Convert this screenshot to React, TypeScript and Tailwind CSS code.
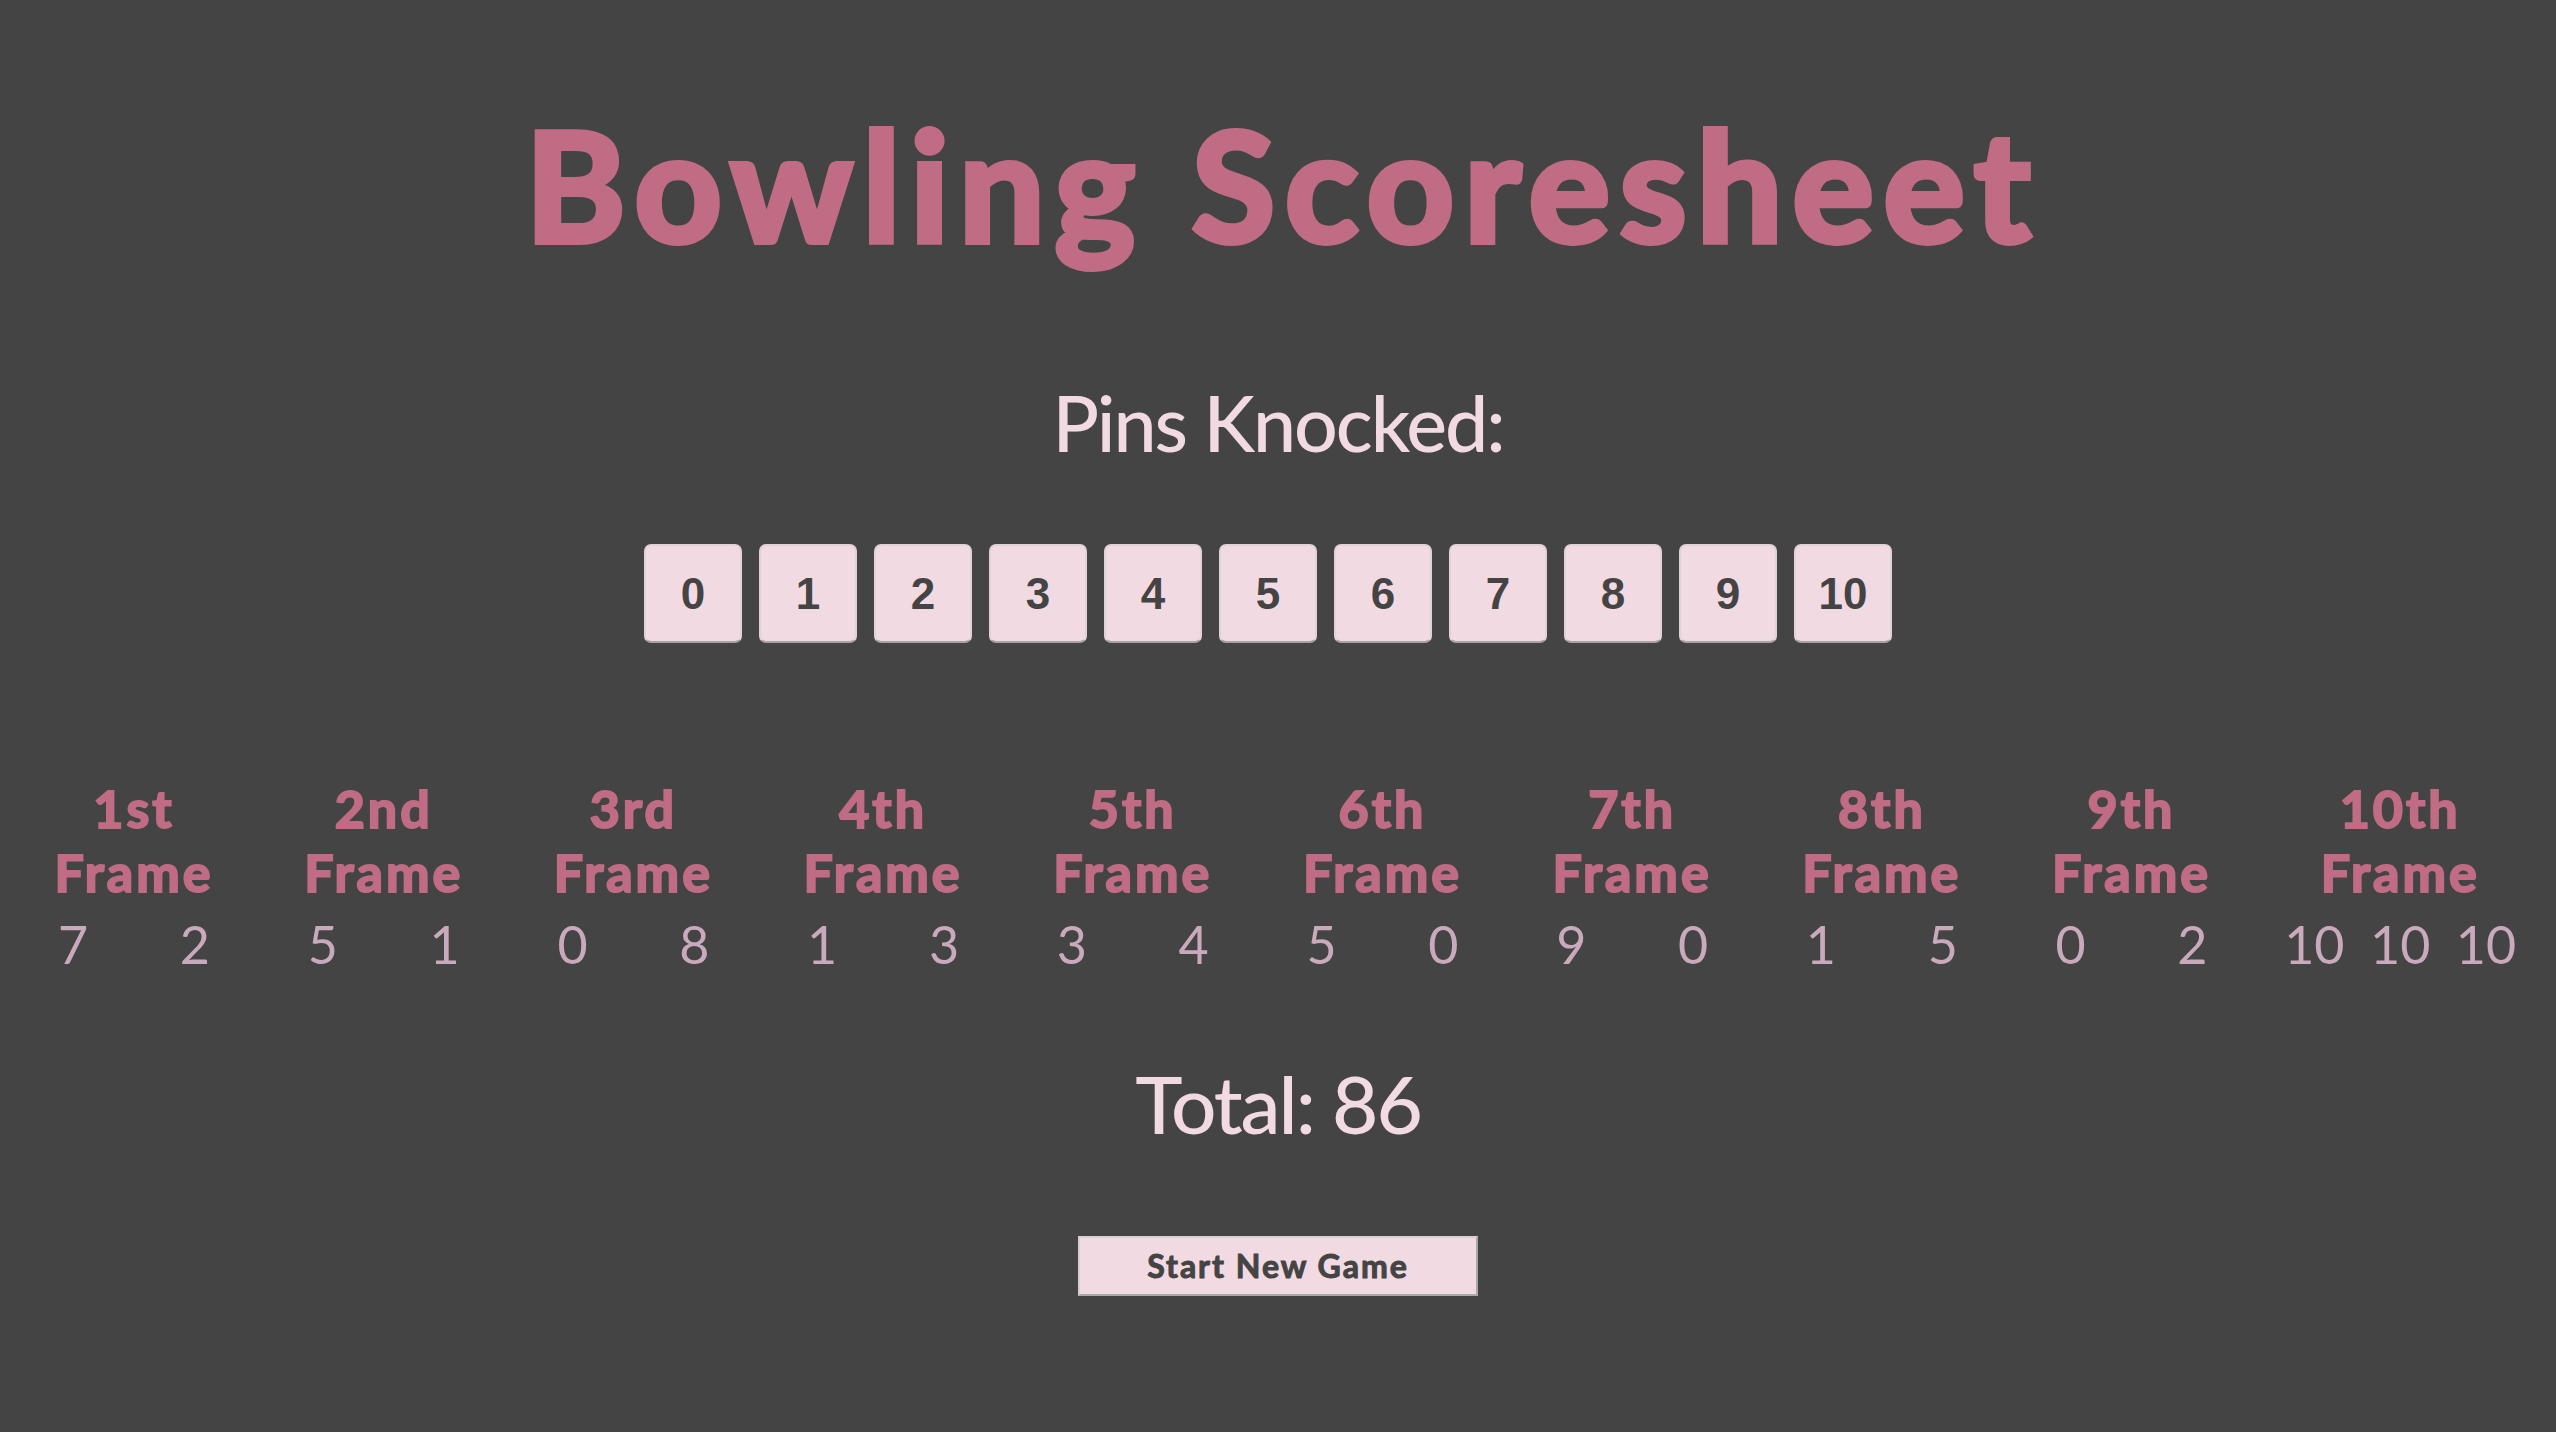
import React from "react";

const frames: { label: string; rolls: string[] }[] = [
  { label: "1st", rolls: ["7", "2"] },
  { label: "2nd", rolls: ["5", "1"] },
  { label: "3rd", rolls: ["0", "8"] },
  { label: "4th", rolls: ["1", "3"] },
  { label: "5th", rolls: ["3", "4"] },
  { label: "6th", rolls: ["5", "0"] },
  { label: "7th", rolls: ["9", "0"] },
  { label: "8th", rolls: ["1", "5"] },
  { label: "9th", rolls: ["0", "2"] },
  { label: "10th", rolls: ["10", "10", "10"] },
];

export default function App() {
  return (
    <div
      className="min-h-[1432px] w-full bg-[#444444] flex flex-col items-center"
      style={{ fontFamily: "Lato, 'Noto Sans', sans-serif" }}
    >
      <h1 className="mt-[107px] ml-[10px] text-[152px] leading-none font-bold text-[#c06c84] tracking-[10px] [-webkit-text-stroke:6px_#c06c84]">
        Bowling Scoresheet
      </h1>
      <h2 className="mt-[125px] text-[77px] leading-none font-medium text-[#f2dae2] tracking-[-2px]">
        Pins Knocked:
      </h2>
      <div className="mt-[83px] mr-[20px] flex gap-[17px]">
        {Array.from({ length: 11 }, (_, i) => (
          <button
            key={i}
            className="w-[98px] h-[99px] rounded-[7px] bg-[#f2dae2] border-2 border-[#e0d3d8] border-b-[#a9a2a5] text-[#444444] text-[44px] font-bold flex items-center justify-center"
            style={{ fontFamily: "'Liberation Sans', Arial, sans-serif" }}
          >
            {i}
          </button>
        ))}
      </div>
      <div className="mt-[133px] w-full flex pl-[56px] gap-[93.7px]">
        {frames.map((f, idx) => (
          <div
            key={f.label}
            className={`${idx === 9 ? "w-[236px] ml-[-21px]" : "w-[156px]"} flex flex-col items-center`}
          >
            <div className="text-[52px] leading-[64px] font-bold text-[#c06c84] text-center whitespace-nowrap tracking-[3px] [-webkit-text-stroke:2px_#c06c84]">
              {f.label}
            </div>
            <div className="text-[52px] leading-[64px] font-bold text-[#c06c84] text-center whitespace-nowrap tracking-[3px] [-webkit-text-stroke:2px_#c06c84]">
              Frame
            </div>
            <div className="mt-[14px] w-full flex justify-between px-[2px] text-[52px] leading-none text-[#c9aabd]">
              {f.rolls.map((r, j) => (
                <span key={j}>{r}</span>
              ))}
            </div>
          </div>
        ))}
      </div>
      <div className="mt-[93px] text-[80px] leading-none font-medium text-[#f2dae2] tracking-[-2px]">
        Total: 86
      </div>
      <button className="mt-[93px] w-[400px] h-[60px] bg-[#f2dae2] border-2 border-t-[#d6d0d2] border-l-[#d6d0d2] border-b-[#a9a9a9] border-r-[#a9a9a9] text-[32px] font-bold text-[#444444] leading-none tracking-[2px] [-webkit-text-stroke:1px_#444444]">
        Start New Game
      </button>
    </div>
  );
}
